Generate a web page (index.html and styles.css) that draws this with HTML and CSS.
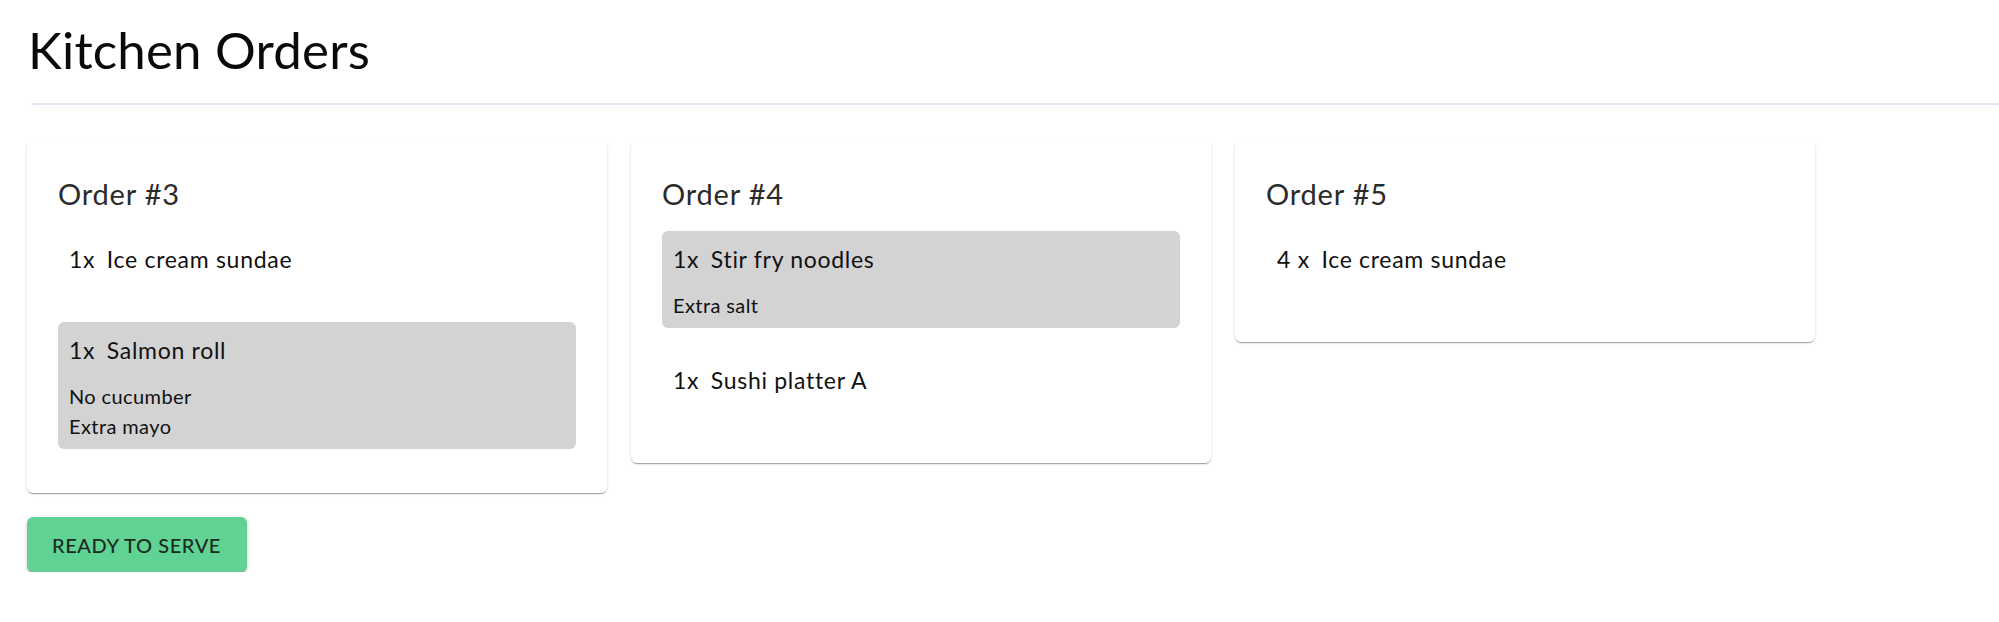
FILE: index.html
```html
<!DOCTYPE html>
<html lang="en">
<head>
<meta charset="utf-8">
<title>Kitchen Orders</title>
<link rel="stylesheet" href="styles.css">
</head>
<body>
<div class="page">
  <h1 class="page-title">Kitchen Orders</h1>
  <div class="divider"></div>
  <div class="orders">
    <section class="card">
      <h2 class="card-title">Order #3</h2>
      <div class="items">
        <div class="item">
          <div class="item-line"><span class="qty">1x</span> <span>Ice cream sundae</span></div>
        </div>
        <div class="item item-noted">
          <div class="item-line"><span class="qty">1x</span> <span>Salmon roll</span></div>
          <div class="note">No cucumber</div>
          <div class="note">Extra mayo</div>
        </div>
      </div>
    </section>
    <section class="card">
      <h2 class="card-title">Order #4</h2>
      <div class="items">
        <div class="item item-noted">
          <div class="item-line"><span class="qty">1x</span> <span>Stir fry noodles</span></div>
          <div class="note">Extra salt</div>
        </div>
        <div class="item">
          <div class="item-line"><span class="qty">1x</span> <span>Sushi platter A</span></div>
        </div>
      </div>
    </section>
    <section class="card">
      <h2 class="card-title">Order #5</h2>
      <div class="items">
        <div class="item">
          <div class="item-line"><span class="qty">4 x</span> <span>Ice cream sundae</span></div>
        </div>
      </div>
    </section>
  </div>
  <button class="serve-btn" type="button">Ready to serve</button>
</div>
</body>
</html>
```
FILE: styles.css
```css
* { box-sizing: border-box; }

html, body {
  margin: 0;
  padding: 0;
  background: #ffffff;
}

body {
  font-family: Lato, "Open Sans", "Noto Sans", sans-serif;
  color: #111111;
}

.page {
  padding: 19px 0 0 27px;
}

.page-title {
  margin: 0;
  font-size: 51px;
  font-weight: 400;
  line-height: 61px;
  color: #0a0a0a;
  padding-left: 1px;
  letter-spacing: 0.2px;
}

.divider {
  margin: 23px 0 0 5px;
  height: 2px;
  background: #e4e7ef;
  box-shadow: 0 2px 5px rgba(120, 130, 170, 0.14);
}

.orders {
  display: flex;
  align-items: flex-start;
  gap: 24px;
  margin-top: 35px;
}

.card {
  width: 580px;
  background: #ffffff;
  border-radius: 6px;
  padding: 31px 31px 44px;
  box-shadow: 0 2px 1px -1px rgba(0, 0, 0, 0.2), 0 1px 1px 0 rgba(0, 0, 0, 0.14), 0 1px 3px 0 rgba(0, 0, 0, 0.12);
}

.card-title {
  margin: 0 0 14px;
  font-size: 29px;
  font-weight: 400;
  line-height: 46px;
  letter-spacing: 0.8px;
  color: #2b2b2b;
}

.items {
  display: flex;
  flex-direction: column;
  gap: 24px;
}

.item {
  padding: 11px 11px 8px;
  border-radius: 6px;
}

.item-noted {
  background: #d3d3d3;
}

.item-line {
  font-size: 23px;
  line-height: 32px;
  letter-spacing: 0.7px;
  margin-bottom: 15px;
  color: #111111;
  padding-top: 1px;
}

.qty {
  margin-right: 5px;
}

.note {
  font-size: 20px;
  line-height: 30px;
  letter-spacing: 0.4px;
  color: #111111;
}

.note:first-of-type {
  margin-top: -1px;
}

.serve-btn {
  display: block;
  margin-top: 24px;
  width: 220px;
  height: 55px;
  padding: 0 0 0 25px;
  border: none;
  border-radius: 6px;
  background: #60d394;
  color: #1b2b22;
  font-family: Lato, "Open Sans", sans-serif;
  font-size: 20px;
  font-weight: 500;
  text-transform: uppercase;
  text-align: left;
  white-space: nowrap;
  letter-spacing: 0.6px;
  box-shadow: 0 3px 1px -2px rgba(0, 0, 0, 0.2), 0 2px 2px 0 rgba(0, 0, 0, 0.14), 0 1px 5px 0 rgba(0, 0, 0, 0.12);
}
```
